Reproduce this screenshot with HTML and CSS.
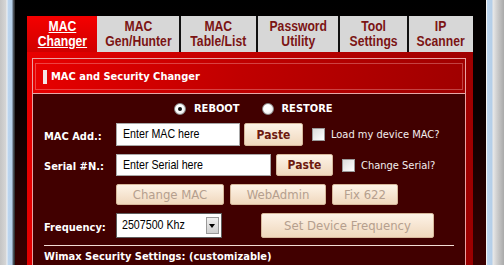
FILE: index.html
```html
<!DOCTYPE html>
<html lang="en">
<head>
    <meta charset="UTF-8">
    <title>MAC Changer</title>
    <link rel="stylesheet" href="styles.css">
</head>
<body>
    <div id="screen">
        <div class="frame-left"></div>
        <div id="app">
            <div id="tabs">
                <div class="tab active t1"><span class="narrow"><u>MAC</u><br><u>Changer</u></span></div>
                <div class="tab t2"><span class="narrow">MAC<br>Gen/Hunter</span></div>
                <div class="tab t3"><span class="narrow">MAC<br>Table/List</span></div>
                <div class="tab t4"><span class="narrow">Password<br>Utility</span></div>
                <div class="tab t5"><span class="narrow">Tool<br>Settings</span></div>
                <div class="tab t6"><span class="narrow">IP<br>Scanner</span></div>
            </div>
            <div id="page">
                <div id="panel">
                    <div class="panel-head">
                        <div class="head-box"><span class="head-bar"></span>MAC and Security Changer</div>
                    </div>
                    <div class="panel-body">
                        <div class="row radios">
                            <span class="radio checked"></span>
                            <span class="radio-label">REBOOT</span>
                            <span class="radio second"></span>
                            <span class="radio-label">RESTORE</span>
                        </div>
                        <div class="row r1">
                            <label class="field-label">MAC Add.:</label>
                            <div class="input mac-input"><span class="narrow-left">Enter MAC here</span></div>
                            <button class="btn paste p1">Paste</button>
                            <span class="check"></span>
                            <span class="check-label">Load my device MAC?</span>
                        </div>
                        <div class="row r2">
                            <label class="field-label">Serial #N.:</label>
                            <div class="input serial-input"><span class="narrow-left">Enter Serial here</span></div>
                            <button class="btn paste p2">Paste</button>
                            <span class="check"></span>
                            <span class="check-label">Change Serial?</span>
                        </div>
                        <div class="row r3">
                            <button class="btn off change-mac">Change MAC</button>
                            <button class="btn off webadmin">WebAdmin</button>
                            <button class="btn off fix">Fix 622</button>
                        </div>
                        <div class="row r4">
                            <label class="field-label">Frequency:</label>
                            <div class="select"><span class="narrow-left">2507500 Khz</span><span class="select-arrow"></span></div>
                            <button class="btn off set-freq">Set Device Frequency</button>
                        </div>
                        <div class="divider"></div>
                        <div class="section-title">Wimax Security Settings: (customizable)</div>
                    </div>
                </div>
            </div>
        </div>
        <div class="frame-right"></div>
    </div>
</body>
</html>
```

FILE: styles.css
```css
* {
    box-sizing: border-box;
}

body {
    margin: 0;
    width: 504px;
    height: 265px;
    overflow: hidden;
    font-family: "DejaVu Sans Condensed", "DejaVu Sans", sans-serif;
    font-size: 11px;
}

#screen {
    display: flex;
    width: 504px;
    height: 265px;
}

.frame-left {
    width: 15px;
    background: linear-gradient(to right, #c4c4c4 0, #d6d6d6 6px, #eef3f8 7px, #bcd5ee 8px, #b7d0ea 12px, #5a6470 13px, #222 15px);
}

.frame-right {
    width: 18px;
    background: linear-gradient(to right, #f4f4f4 0, #f4f4f4 1px, #bcd5ee 1px, #b4cee8 6px, #e8e8e8 7px, #cfcfcf 11px, #a9a9a9 18px);
}

#app {
    width: 471px;
    padding: 16px 13px 0 12px;
    background: linear-gradient(#000 0, #090000 40%, #3a0000 100%);
    display: flex;
    flex-direction: column;
}

#tabs {
    display: flex;
    height: 36px;
}

/* no narrow Arial installed, so squeeze the regular one */
.narrow {
    display: inline-block;
    transform: scaleX(0.84);
    white-space: nowrap;
}

.narrow-left {
    display: inline-block;
    transform: scaleX(0.82);
    transform-origin: left center;
    white-space: nowrap;
}

.tab {
    height: 36px;
    padding-top: 3px;
    background: #d7d7d7;
    border-right: 2px solid #111;
    color: #7b1414;
    font-family: "Liberation Sans", Arial, sans-serif;
    font-weight: bold;
    font-size: 14.5px;
    line-height: 15px;
    text-align: center;
    display: flex;
    justify-content: center;
}

.tab.active {
    background: linear-gradient(#f50000, #d00000);
    color: #fff;
    border-right: none;
}

.t1 { width: 70px; }
.t2 { width: 84px; }
.t3 { width: 77px; }
.t4 { width: 82px; }
.t5 { width: 69px; }
.t6 { width: 64px; border-right: none; }

#page {
    flex: 1;
    padding: 6px 7px 0 5px;
    background: linear-gradient(100deg, #e90000 0%, #c00000 45%, #9a0000 100%);
}

#panel {
    height: 100%;
    border: 1px solid #eaa2a2;
    border-bottom: none;
    display: flex;
    flex-direction: column;
}

.panel-head {
    padding: 4px 2px 3px;
}

.head-box {
    height: 27px;
    border: 1px solid rgba(255, 190, 190, 0.35);
    display: flex;
    align-items: center;
    padding-left: 7px;
    color: #fff;
    font-weight: bold;
    font-size: 11px;
}

.head-bar {
    width: 4px;
    height: 14px;
    background: #f4e4e4;
    margin-right: 4px;
}

.panel-body {
    flex: 1;
    background: #410000;
    border-top: 1px solid #e8a6a6;
    padding-left: 11px;
    color: #fff;
}

.row {
    display: flex;
    align-items: center;
}

.radios {
    height: 29px;
    padding-left: 130px;
    font-weight: bold;
}

.radio {
    width: 12px;
    height: 12px;
    border-radius: 50%;
    border: 1px solid #8a8a8a;
    background: radial-gradient(circle at 40% 40%, #fff 40%, #d8d8d8 100%);
    position: relative;
}

.radio.checked::after {
    content: '';
    position: absolute;
    left: 3px;
    top: 3px;
    width: 4px;
    height: 4px;
    border-radius: 50%;
    background: #111;
}

.radio-label {
    margin-left: 8px;
}

.radio.second {
    margin-left: 22px;
}

.field-label {
    width: 72px;
    font-weight: bold;
    padding-top: 3px;
}

.r1 { height: 23px; }
.r2 { height: 22px; margin-top: 8px; }
.r3 { height: 21px; margin-top: 8px; padding-left: 72px; }
.r4 { height: 25px; margin-top: 8px; }

.input {
    height: 100%;
    background: #fff;
    border: 1px solid #a8a8a8;
    color: #000;
    font-family: "Liberation Sans", Arial, sans-serif;
    font-size: 13px;
    line-height: 20px;
    padding-left: 6px;
}

.mac-input { width: 124px; }
.serial-input { width: 155px; }

.btn {
    height: 100%;
    border: 1px solid #d6b89c;
    border-radius: 2px;
    background: linear-gradient(#fdf3e7, #f0d8bd);
    color: #6d1a10;
    font-family: "DejaVu Sans Condensed", "DejaVu Sans", sans-serif;
    font-weight: bold;
    font-size: 12px;
    padding: 0;
}

.btn.off {
    color: #b59f8e;
    font-weight: normal;
    font-size: 13px;
}

.p1 { width: 59px; margin-left: 4px; }
.p2 { width: 57px; margin-left: 5px; }

.check {
    width: 13px;
    height: 13px;
    margin-left: 9px;
    border: 1px solid #9a9a9a;
    background: linear-gradient(135deg, #dcdcdc, #fff);
}

.check-label {
    margin-left: 6px;
    color: #f4eeee;
}

.change-mac { width: 108px; }
.webadmin { width: 96px; margin-left: 6px; }
.fix { width: 66px; margin-left: 6px; }

.select {
    width: 106px;
    height: 100%;
    background: #fff;
    border: 1px solid #5e5e5e;
    color: #000;
    font-family: "Liberation Sans", Arial, sans-serif;
    font-size: 13px;
    line-height: 22px;
    padding-left: 5px;
    position: relative;
}

.select-arrow {
    position: absolute;
    right: 2px;
    top: 3px;
    width: 13px;
    height: 17px;
    background: linear-gradient(#f0f0f0, #cfcfcf);
    border: 1px solid #9a9a9a;
}

.select-arrow::after {
    content: '';
    position: absolute;
    left: 2px;
    top: 6px;
    border-left: 3.5px solid transparent;
    border-right: 3.5px solid transparent;
    border-top: 4px solid #000;
}

.set-freq {
    width: 173px;
    margin-left: 39px;
}

.divider {
    width: 410px;
    margin-top: 7px;
    border-top: 1px solid #f2dcd4;
}

.section-title {
    margin-top: 4px;
    font-weight: bold;
    font-size: 11px;
    line-height: 14px;
}
```
